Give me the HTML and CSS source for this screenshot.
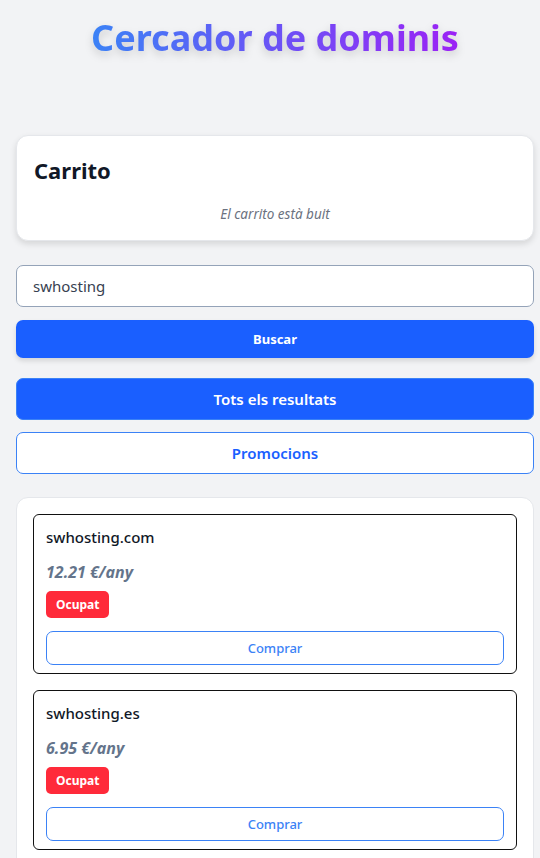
FILE: index.html
```html
<!DOCTYPE html>
<html lang="ca">
<head>
<meta charset="utf-8">
<title>Cercador de dominis</title>
<link rel="stylesheet" href="styles.css">
</head>
<body>
<div class="page">
  <h1 class="title">Cercador de dominis</h1>

  <section class="card cart">
    <h2 class="cart-title">Carrito</h2>
    <p class="cart-empty">El carrito està buit</p>
  </section>

  <div class="search">
    <input class="search-input" type="text" value="swhosting">
    <button class="btn btn-search">Buscar</button>
  </div>

  <div class="tabs">
    <button class="btn btn-tab active">Tots els resultats</button>
    <button class="btn btn-tab outline">Promocions</button>
  </div>

  <section class="card results">
    <div class="domain">
      <div class="domain-name">swhosting.com</div>
      <div class="domain-price">12.21 €/any</div>
      <span class="badge">Ocupat</span>
      <button class="btn btn-buy">Comprar</button>
    </div>
    <div class="domain">
      <div class="domain-name">swhosting.es</div>
      <div class="domain-price">6.95 €/any</div>
      <span class="badge">Ocupat</span>
      <button class="btn btn-buy">Comprar</button>
    </div>
  </section>
</div>
</body>
</html>
```

FILE: styles.css
```css
* { box-sizing: border-box; }
html, body { margin: 0; padding: 0; }
body {
  background: #f2f3f5;
  font-family: "Noto Sans", "Open Sans", sans-serif;
  color: #1f2937;
  overflow: hidden;
}
.page {
  padding: 16px 6px 0 16px;
  display: flex;
  flex-direction: column;
}
.title {
  align-self: center;
  margin: 0 0 75px 0;
  text-align: center;
  font-size: 36px;
  font-weight: 700;
  line-height: 44px;
  background: linear-gradient(90deg, #3b82f6, #9b22f5);
  -webkit-background-clip: text;
  background-clip: text;
  color: transparent;
  filter: drop-shadow(0 4px 4px rgba(0,0,0,0.15));
}
.card {
  background: #fff;
  border: 1px solid #e5e7eb;
  border-radius: 12px;
}
.cart {
  padding: 17px 17px 16px;
  box-shadow: 0 3px 6px rgba(0,0,0,0.12);
}
.cart-title {
  margin: 0;
  font-size: 22px;
  font-weight: 700;
  line-height: 34px;
  color: #111827;
}
.cart-empty {
  margin: 17px 0 0 0;
  text-align: center;
  font-size: 13.5px;
  font-style: italic;
  color: #6b7280;
  line-height: 20px;
}
.search {
  margin-top: 24px;
  display: flex;
  flex-direction: column;
  gap: 13px;
}
.search-input {
  height: 42px;
  border: 1px solid #94a3b8;
  border-radius: 7px;
  padding: 0 16px;
  font-family: inherit;
  font-size: 15px;
  color: #374151;
  background: #fff;
  outline: none;
}
.btn {
  font-family: inherit;
  cursor: pointer;
  border-radius: 7px;
  width: 100%;
}
.btn-search {
  height: 38px;
  background: #1a5fff;
  border: none;
  color: #fff;
  font-size: 13px;
  font-weight: 700;
  box-shadow: 0 3px 5px rgba(0,0,0,0.12);
}
.tabs {
  margin-top: 20px;
  display: flex;
  flex-direction: column;
  gap: 12px;
}
.btn-tab {
  height: 42px;
  font-size: 15px;
  font-weight: 600;
}
.btn-tab.active {
  background: #1a5fff;
  border: 1px solid #3b82f6;
  color: #fff;
}
.btn-tab.outline {
  background: #fff;
  border: 1px solid #3b82f6;
  color: #1a5fff;
}
.results {
  margin-top: 23px;
  padding: 16px 16px 24px;
  display: flex;
  flex-direction: column;
  gap: 16px;
}
.domain {
  border: 1px solid #111;
  border-radius: 6px;
  padding: 11px 12px 8px;
  display: flex;
  flex-direction: column;
  align-items: flex-start;
}
.domain-name {
  font-size: 15px;
  font-weight: 500;
  color: #111827;
  line-height: 22px;
}
.domain-price {
  margin-top: 14px;
  font-size: 16px;
  font-weight: 700;
  font-style: italic;
  color: #64748b;
  line-height: 20px;
}
.badge {
  margin-top: 9px;
  background: #ff2a3a;
  color: #fff;
  font-size: 12px;
  font-weight: 700;
  border-radius: 5px;
  padding: 0 10px;
  height: 27px;
  line-height: 27px;
}
.btn-buy {
  margin-top: 13px;
  height: 34px;
  background: #fff;
  border: 1px solid #3b82f6;
  color: #3b82f6;
  font-size: 13px;
  font-weight: 500;
}
```
